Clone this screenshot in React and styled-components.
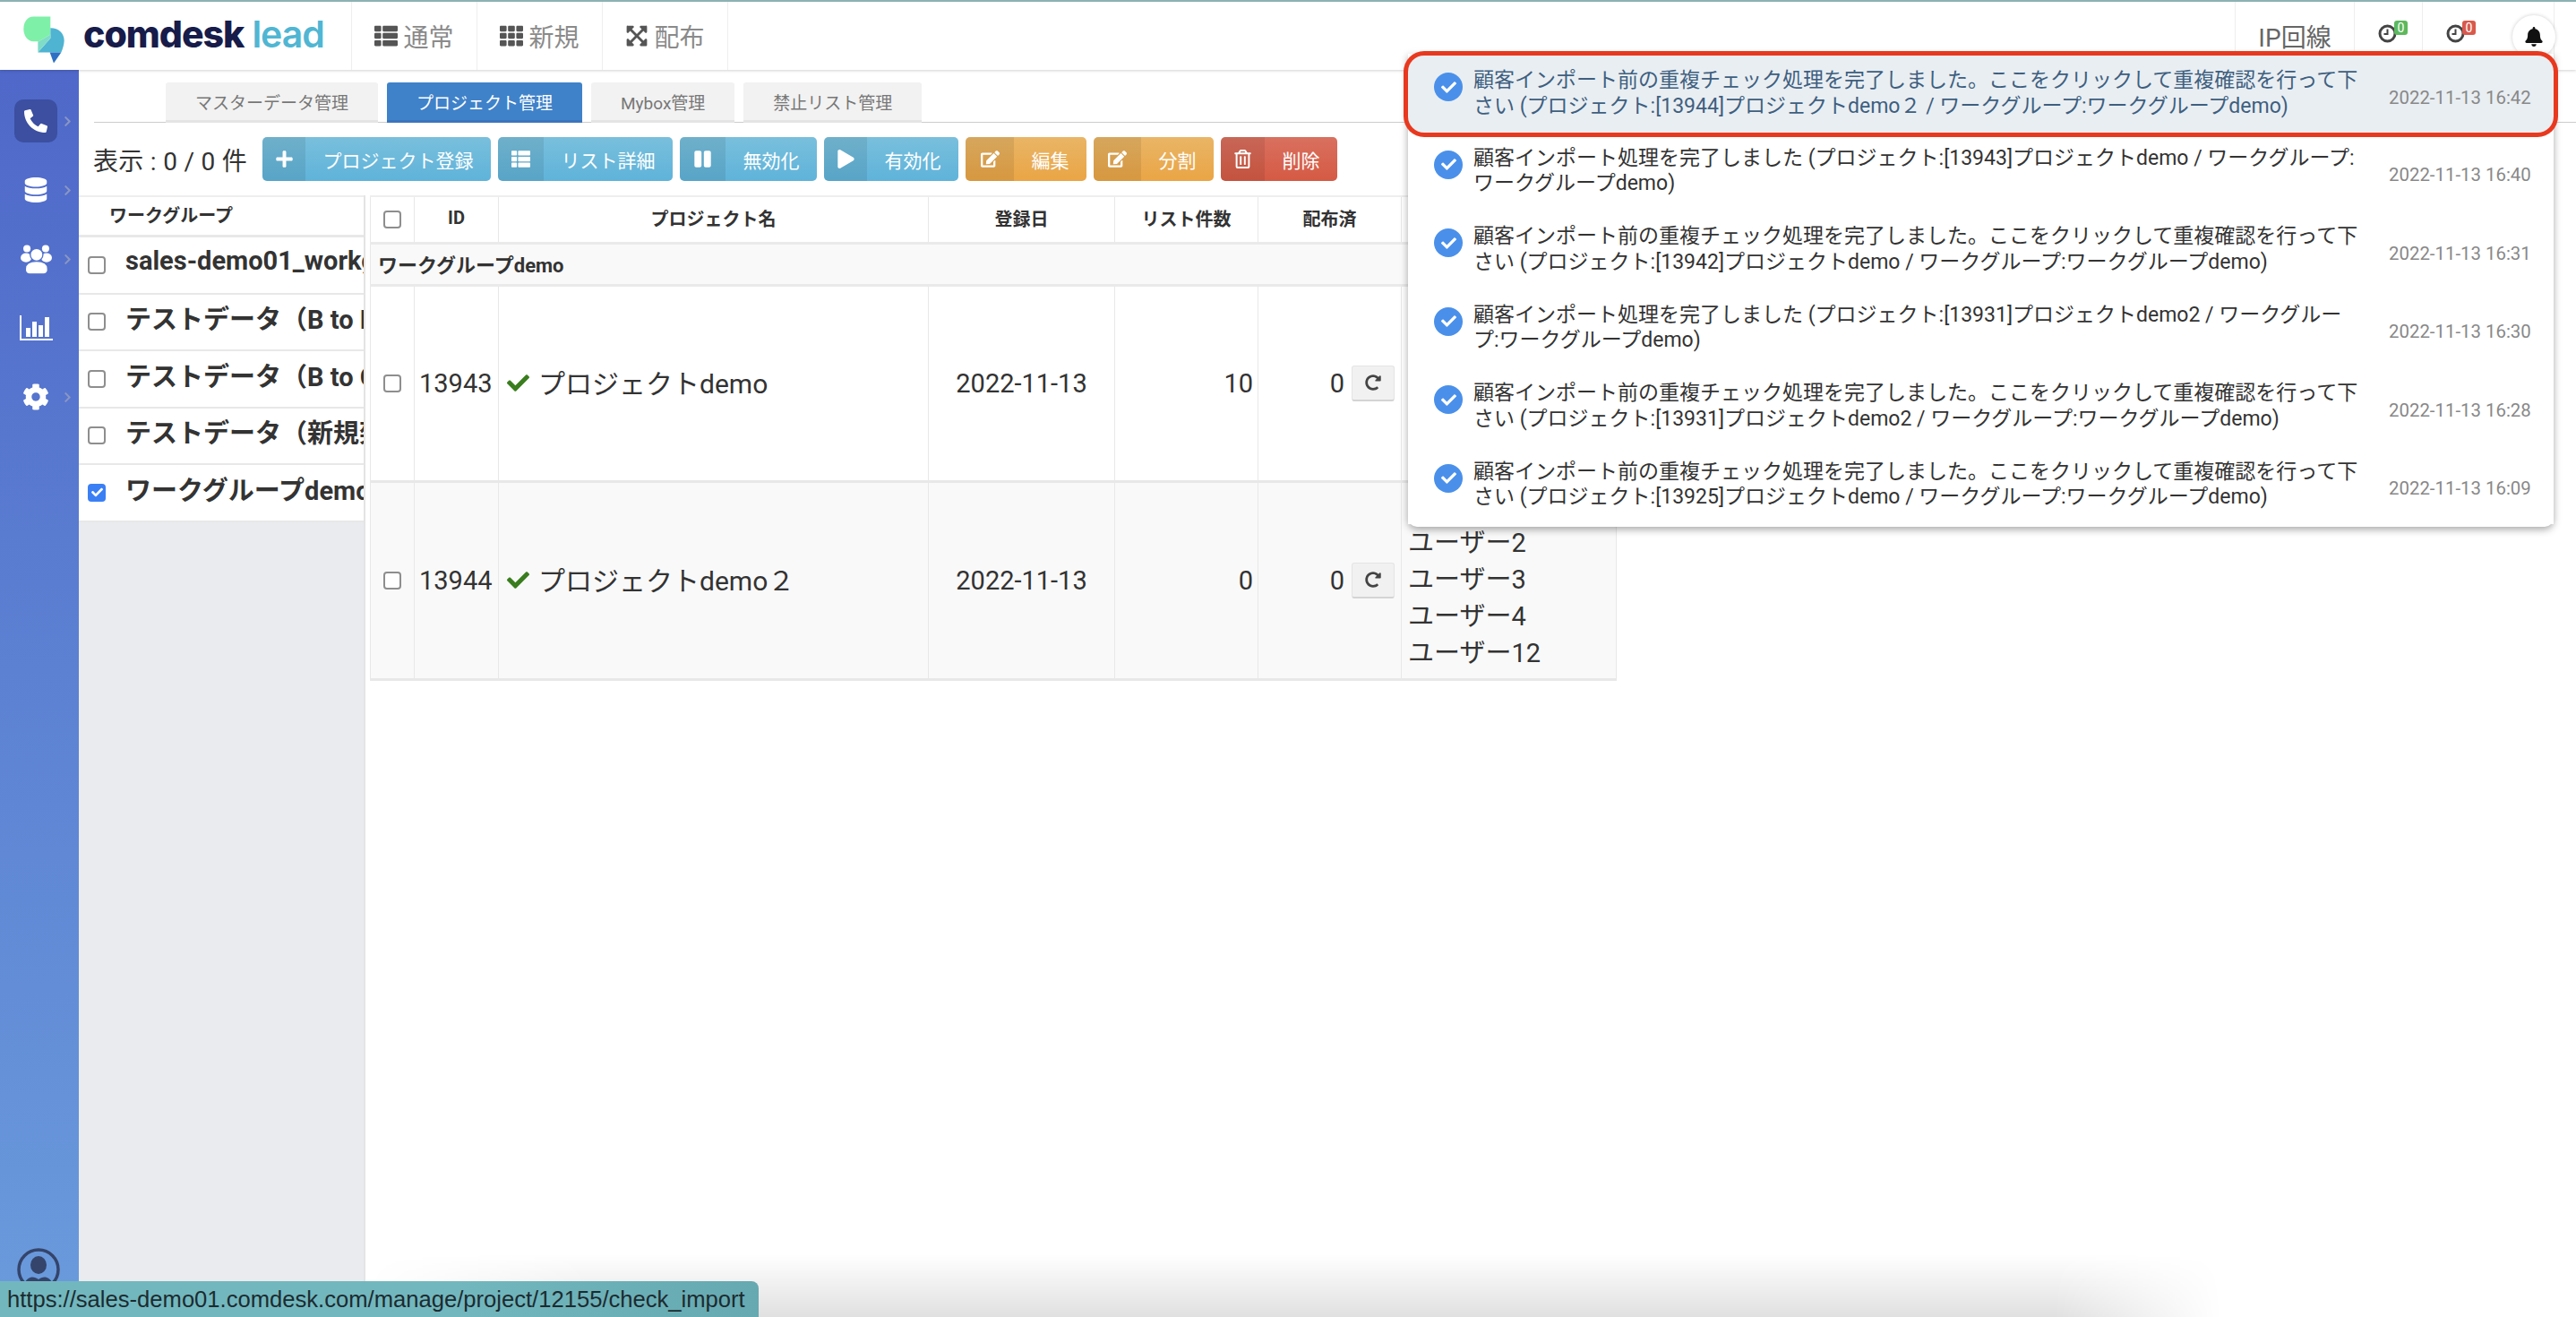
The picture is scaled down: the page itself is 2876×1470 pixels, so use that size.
import React from 'react'
import styled, { createGlobalStyle } from 'styled-components'
import {
  FaBell,
  FaCheck,
  FaChevronRight,
  FaCog,
  FaDatabase,
  FaEdit,
  FaExpandArrowsAlt,
  FaPause,
  FaPhoneAlt,
  FaPlay,
  FaPlus,
  FaRedoAlt,
  FaRegTrashAlt,
  FaTh,
  FaThList,
} from 'react-icons/fa'

const SANS = `Roboto, "Noto Sans CJK JP", sans-serif`

const GlobalStyle = createGlobalStyle`
  html, body {
    margin: 0;
    padding: 0;
    background: #fff;
    font-family: ${SANS};
    color: #333;
  }
  * {
    box-sizing: border-box;
  }
`

const toolbarButtons = [
  { label: 'プロジェクト登録', icon: <FaPlus />, iconWidth: 48, tone: 'info' },
  { label: 'リスト詳細', icon: <FaThList />, iconWidth: 51, tone: 'info' },
  { label: '無効化', icon: <FaPause />, iconWidth: 51, tone: 'info' },
  { label: '有効化', icon: <FaPlay />, iconWidth: 48, tone: 'info' },
  { label: '編集', icon: <FaEdit />, iconWidth: 54, tone: 'warning' },
  { label: '分割', icon: <FaEdit />, iconWidth: 53, tone: 'warning' },
  { label: '削除', icon: <FaRegTrashAlt />, iconWidth: 49, tone: 'danger' },
]

const tones = {
  info: 'linear-gradient(#79bfdc, #5fb3da)',
  warning: 'linear-gradient(#e9b566, #eaa545)',
  danger: 'linear-gradient(#d9705f, #d55a44)',
}

const workgroups = [
  { name: 'sales-demo01_workgroup' },
  { name: 'テストデータ（B to B）' },
  { name: 'テストデータ（B to C）' },
  { name: 'テストデータ（新規架電）' },
  { name: 'ワークグループdemo', checked: true },
]

const notices = [
  {
    lines: ['顧客インポート前の重複チェック処理を完了しました。ここをクリックして重複確認を行って下', 'さい (プロジェクト:[13944]プロジェクトdemo２ / ワークグループ:ワークグループdemo)'],
    time: '2022-11-13 16:42',
    active: true,
  },
  {
    lines: ['顧客インポート処理を完了しました (プロジェクト:[13943]プロジェクトdemo / ワークグループ:', 'ワークグループdemo)'],
    time: '2022-11-13 16:40',
  },
  {
    lines: ['顧客インポート前の重複チェック処理を完了しました。ここをクリックして重複確認を行って下', 'さい (プロジェクト:[13942]プロジェクトdemo / ワークグループ:ワークグループdemo)'],
    time: '2022-11-13 16:31',
  },
  {
    lines: ['顧客インポート処理を完了しました (プロジェクト:[13931]プロジェクトdemo2 / ワークグルー', 'プ:ワークグループdemo)'],
    time: '2022-11-13 16:30',
  },
  {
    lines: ['顧客インポート前の重複チェック処理を完了しました。ここをクリックして重複確認を行って下', 'さい (プロジェクト:[13931]プロジェクトdemo2 / ワークグループ:ワークグループdemo)'],
    time: '2022-11-13 16:28',
  },
  {
    lines: ['顧客インポート前の重複チェック処理を完了しました。ここをクリックして重複確認を行って下', 'さい (プロジェクト:[13925]プロジェクトdemo / ワークグループ:ワークグループdemo)'],
    time: '2022-11-13 16:09',
  },
]

const Logo = () => (
  <LogoMark viewBox="30 25 150 170">
    <path d="M70 32H127V92L88 115H70C50 115 37 95 37 73C37 50 50 32 70 32Z" fill="#7ef0a8" />
    <path d="M127 70C155 70 173 88 173 112C173 125 168 140 163 152H85L127 105Z" fill="#4fb3d2" />
    <path d="M85 115H88L127 92V105L85 152Z" fill="#7fdcc6" />
    <path d="M125 152H163L138 188Z" fill="#2f6fc4" />
  </LogoMark>
)

const ChartIcon = () => (
  <svg width="37" height="28" viewBox="0 0 37 28" fill="#fff">
    <path d="M0 0h2v26h35v2H0z" />
    <rect x="7" y="14" width="5" height="10" />
    <rect x="14" y="7" width="5" height="17" />
    <rect x="21" y="11" width="5" height="13" />
    <rect x="28" y="2" width="5" height="22" />
  </svg>
)

const GroupIcon = () => (
  <svg width="35" height="33" viewBox="72 520 104 97" fill="#fff">
    <circle cx="93" cy="533" r="12" />
    <circle cx="155" cy="533" r="12" />
    <ellipse cx="90" cy="563" rx="18" ry="15" />
    <ellipse cx="158" cy="563" rx="18" ry="15" />
    <circle cx="125" cy="553" r="21" stroke="#5172cc" strokeWidth="4" />
    <path
      d="M88 600C88 580 105 575 125 575C145 575 162 580 162 600V605C162 612 155 617 148 617H102C95 617 88 612 88 605Z"
      stroke="#5172cc"
      strokeWidth="4"
    />
  </svg>
)

const UserRing = () => (
  <svg width="48" height="48" viewBox="0 0 48 48" fill="none">
    <circle cx="24" cy="24" r="22" stroke="#34446b" strokeWidth="3.5" />
    <ellipse cx="24" cy="19" rx="9" ry="10" fill="#34446b" />
    <path d="M8 40C12 31 19 31 24 35C29 31 36 31 40 40C30 47 18 47 8 40Z" fill="#34446b" />
  </svg>
)

const ClockIcon = () => (
  <svg width="21" height="21" viewBox="0 0 21 21" fill="none" stroke="#444">
    <circle cx="10.5" cy="10.5" r="8.5" strokeWidth="3" />
    <path d="M10.5 5.5v5.5h-4" strokeWidth="2" />
  </svg>
)

const SideNav = ({ active, arrow = true, children }) => (
  <SideItem>
    <SideIcon $active={active}>{children}</SideIcon>
    <SideArrow $show={arrow}>
      <FaChevronRight />
    </SideArrow>
  </SideItem>
)

const Tick = ({ checked }) => (
  <Box $checked={checked}>{checked && <FaCheck />}</Box>
)

const App = () => {
  return (
    <Page>
      <GlobalStyle />
      <TopStrip />
      <Header>
        <Brand>
          <Logo />
          <Wordmark>
            comdesk<Lead>lead</Lead>
          </Wordmark>
        </Brand>
        <NavItem>
          <FaThList />
          <span>通常</span>
        </NavItem>
        <NavItem>
          <FaTh />
          <span>新規</span>
        </NavItem>
        <NavItem>
          <FaExpandArrowsAlt />
          <span>配布</span>
        </NavItem>
        <HeaderRight>
          <IpItem>IP回線</IpItem>
          <ClockItem>
            <ClockIcon />
            <ClockBadge $tone="#5cb85c">0</ClockBadge>
          </ClockItem>
          <ClockItem>
            <ClockIcon />
            <ClockBadge $tone="#d9594c">0</ClockBadge>
          </ClockItem>
          <BellItem>
            <BellCircle>
              <FaBell />
            </BellCircle>
          </BellItem>
        </HeaderRight>
      </Header>

      <Body>
        <Sidebar>
          <SideNav active>
            <FaPhoneAlt size={26} />
          </SideNav>
          <SideNav>
            <FaDatabase size={28} />
          </SideNav>
          <SideNav>
            <GroupIcon />
          </SideNav>
          <SideNav arrow={false}>
            <ChartIcon />
          </SideNav>
          <SideNav>
            <FaCog size={30} />
          </SideNav>
          <UserSlot>
            <UserRing />
          </UserSlot>
        </Sidebar>

        <Content>
          <Tabs>
            <Tab>マスターデータ管理</Tab>
            <Tab $active>プロジェクト管理</Tab>
            <Tab>Mybox管理</Tab>
            <Tab>禁止リスト管理</Tab>
          </Tabs>

          <Toolbar>
            <Count>表示 : 0 / 0 件</Count>
            {toolbarButtons.map((button) => (
              <ActionButton key={button.label} $tone={button.tone}>
                <ActionIcon $width={button.iconWidth}>{button.icon}</ActionIcon>
                <ActionLabel>{button.label}</ActionLabel>
              </ActionButton>
            ))}
          </Toolbar>

          <Split>
            <GroupPanel>
              <GroupHead>ワークグループ</GroupHead>
              {workgroups.map((group) => (
                <GroupRow key={group.name}>
                  <Tick checked={group.checked} />
                  <GroupName>{group.name}</GroupName>
                </GroupRow>
              ))}
            </GroupPanel>

            <ProjectTable>
              <colgroup>
                <col width="49" />
                <col width="94" />
                <col width="480" />
                <col width="208" />
                <col width="160" />
                <col width="160" />
                <col width="240" />
              </colgroup>
              <thead>
                <tr>
                  <HeadCell>
                    <Tick />
                  </HeadCell>
                  <HeadCell>ID</HeadCell>
                  <HeadCell>プロジェクト名</HeadCell>
                  <HeadCell>登録日</HeadCell>
                  <HeadCell>リスト件数</HeadCell>
                  <HeadCell>配布済</HeadCell>
                  <HeadCell>担当者</HeadCell>
                </tr>
              </thead>
              <tbody>
                <tr>
                  <GroupCell colSpan={7}>ワークグループdemo</GroupCell>
                </tr>
                <Row>
                  <TickCell>
                    <Tick />
                  </TickCell>
                  <Cell>13943</Cell>
                  <Cell>
                    <ProjectName>
                      <FaCheck />
                      プロジェクトdemo
                    </ProjectName>
                  </Cell>
                  <Cell $align="center">2022-11-13</Cell>
                  <Cell $align="right">10</Cell>
                  <Cell $align="right">
                    <Allocated>
                      0
                      <RefreshButton>
                        <FaRedoAlt />
                      </RefreshButton>
                    </Allocated>
                  </Cell>
                  <UserCell>ユーザー1</UserCell>
                </Row>
                <Row $striped>
                  <TickCell $tall>
                    <Tick />
                  </TickCell>
                  <Cell>13944</Cell>
                  <Cell>
                    <ProjectName>
                      <FaCheck />
                      プロジェクトdemo２
                    </ProjectName>
                  </Cell>
                  <Cell $align="center">2022-11-13</Cell>
                  <Cell $align="right">0</Cell>
                  <Cell $align="right">
                    <Allocated>
                      0
                      <RefreshButton>
                        <FaRedoAlt />
                      </RefreshButton>
                    </Allocated>
                  </Cell>
                  <UserCell>
                    ユーザー1
                    <br />
                    ユーザー2
                    <br />
                    ユーザー3
                    <br />
                    ユーザー4
                    <br />
                    ユーザー12
                  </UserCell>
                </Row>
              </tbody>
            </ProjectTable>
          </Split>
        </Content>
      </Body>

      <NoticePanel>
        {notices.map((notice) => (
          <Notice key={notice.time} $active={notice.active}>
            <NoticeIcon>
              <FaCheck />
            </NoticeIcon>
            <NoticeText>
              {notice.lines[0]}
              <br />
              {notice.lines[1]}
            </NoticeText>
            <NoticeTime>{notice.time}</NoticeTime>
          </Notice>
        ))}
      </NoticePanel>

      <BottomFade />
      <StatusBar>https://sales-demo01.comdesk.com/manage/project/12155/check_import</StatusBar>
    </Page>
  )
}

export default App

const Page = styled.div`
  position: relative;
  width: 2876px;
  height: 1470px;
  display: flex;
  flex-direction: column;
  overflow: hidden;
`

const TopStrip = styled.div`
  height: 2px;
  background: #8fb4b8;
`

const Header = styled.header`
  height: 76px;
  display: flex;
  align-items: stretch;
  background: #fff;
  box-shadow: 0 1px 3px rgba(0, 0, 0, 0.18);
  position: relative;
  z-index: 1;
`

const Brand = styled.div`
  width: 393px;
  position: relative;
  border-right: 1px solid #eee;
  display: flex;
  align-items: flex-start;
  padding: 14px 0 0 24px;
`

const LogoMark = styled.svg`
  width: 50px;
  height: 57px;
  flex: none;
`

const Wordmark = styled.div`
  margin-left: 19px;
  font-family: Inter, sans-serif;
  font-size: 41px;
  line-height: 44px;
  font-weight: 800;
  letter-spacing: -1px;
  color: #171c4a;
  white-space: nowrap;
`

const Lead = styled.span`
  margin-left: 9px;
  color: #4fb6d3;
  font-weight: 600;
`

const NavItem = styled.div`
  width: 140px;
  border-right: 1px solid #eee;
  display: flex;
  align-items: center;
  justify-content: center;
  gap: 6px;
  font-size: 28px;
  color: #8a8a8a;

  svg {
    color: #555;
    font-size: 26px;
  }
`

const HeaderRight = styled.div`
  margin-left: auto;
  margin-right: 24px;
  display: flex;
  align-items: stretch;
`

const IpItem = styled.div`
  width: 133px;
  border-left: 1px solid #eee;
  display: flex;
  align-items: center;
  justify-content: center;
  font-size: 28px;
  color: #666;
`

const ClockItem = styled.div`
  width: 76px;
  border-left: 1px solid #eee;
  position: relative;

  svg {
    position: absolute;
    left: 26px;
    top: 25px;
  }
`

const ClockBadge = styled.span`
  position: absolute;
  left: 44px;
  top: 21px;
  width: 15px;
  height: 16px;
  border-radius: 3px;
  background: ${(props) => props.$tone};
  color: #fff;
  font-size: 14px;
  line-height: 16px;
  text-align: center;
`

const BellItem = styled.div`
  width: 72px;
  border-right: 1px solid #eee;
  position: relative;
`

const BellCircle = styled.div`
  position: absolute;
  left: 25px;
  top: 15px;
  width: 48px;
  height: 48px;
  border-radius: 50%;
  background: #fff;
  box-shadow: 0 0 4px rgba(0, 0, 0, 0.2);
  display: flex;
  align-items: center;
  justify-content: center;
  font-size: 22px;
  color: #111;
`

const Body = styled.div`
  flex: 1;
  display: flex;
  min-height: 0;
`

const Sidebar = styled.nav`
  width: 88px;
  flex: none;
  display: flex;
  flex-direction: column;
  gap: 29px;
  padding: 33px 0 29px;
  background: linear-gradient(#4f68c9, #6a9bdc);
`

const SideItem = styled.div`
  display: flex;
  align-items: center;
  padding-left: 16px;
`

const SideIcon = styled.div`
  width: 48px;
  height: 48px;
  border-radius: 10px;
  display: flex;
  align-items: center;
  justify-content: center;
  color: #fff;
  background: ${(props) => (props.$active ? '#3c4fa0' : 'transparent')};
`

const SideArrow = styled.div`
  margin-left: 5px;
  font-size: 13px;
  line-height: 0;
  color: #8a96c4;
  visibility: ${(props) => (props.$show ? 'visible' : 'hidden')};
`

const UserSlot = styled.div`
  margin-top: auto;
  padding-left: 19px;
  line-height: 0;
`

const Content = styled.main`
  flex: 1;
  min-width: 0;
  display: flex;
  flex-direction: column;
  background: #fff;
`

const Tabs = styled.div`
  margin: 14px 0 0 17px;
  height: 45px;
  padding-left: 80px;
  display: flex;
  gap: 10px;
  border-bottom: 1px solid #ccc;
`

const Tab = styled.div`
  height: 45px;
  padding: 0 33px;
  display: flex;
  align-items: center;
  font-size: 19px;
  border-radius: 3px 3px 0 0;
  background: ${(props) => (props.$active ? '#3f82c9' : '#f2f2f2')};
  border-bottom: 3px solid ${(props) => (props.$active ? '#3a74bd' : '#e4e4e4')};
  color: ${(props) => (props.$active ? '#fff' : '#777')};
`

const Toolbar = styled.div`
  margin-top: 16px;
  height: 49px;
  padding-left: 16px;
  display: flex;
  gap: 8px;
`

const Count = styled.div`
  width: 181px;
  display: flex;
  align-items: center;
  font-size: 28px;
  letter-spacing: 0.3px;
  color: #333;
  white-space: nowrap;
`

const ActionButton = styled.div`
  display: flex;
  border-radius: 5px;
  overflow: hidden;
  color: #fff;
  background: ${(props) => tones[props.$tone]};
`

const ActionIcon = styled.span`
  width: ${(props) => props.$width}px;
  display: flex;
  align-items: center;
  justify-content: center;
  font-size: 21px;
  background: rgba(0, 0, 0, 0.08);
`

const ActionLabel = styled.span`
  padding: 0 19.5px;
  display: flex;
  align-items: center;
  font-size: 21px;
`

const Split = styled.div`
  margin-top: 16px;
  flex: 1;
  display: flex;
  min-height: 0;
`

const GroupPanel = styled.aside`
  width: 320px;
  flex: none;
  background: #e9ebee;
  border-right: 2px solid #e4e4e4;
`

const GroupHead = styled.div`
  height: 47px;
  padding: 0 0 4px 34px;
  display: flex;
  align-items: center;
  font-size: 20px;
  font-weight: 700;
  color: #333;
  background: #fff;
  border-top: 2px solid #eee;
  border-bottom: 3px solid #e8e8e8;
`

const GroupRow = styled.div`
  height: 63.5px;
  padding-left: 10px;
  display: flex;
  align-items: center;
  gap: 22px;
  background: #fff;
  border-bottom: 2px solid #e8e8e8;
`

const GroupName = styled.div`
  flex: 1;
  min-width: 0;
  overflow: hidden;
  white-space: nowrap;
  font-size: 29px;
  font-weight: 700;
  color: #333;
  margin-top: -10px;
`

const Box = styled.span`
  flex: none;
  width: 20px;
  height: 20px;
  display: inline-flex;
  align-items: center;
  justify-content: center;
  vertical-align: middle;
  border-radius: 4px;
  border: ${(props) => (props.$checked ? 'none' : '2px solid #8e8e8e')};
  background: ${(props) => (props.$checked ? '#3b7ff5' : '#fff')};
  color: #fff;
  font-size: 13px;
`

const ProjectTable = styled.table`
  margin-left: 5px;
  width: 1391px;
  table-layout: fixed;
  border-collapse: collapse;
  align-self: flex-start;
`

const HeadCell = styled.th`
  height: 52px;
  padding: 0 0 3px;
  font-size: 20px;
  font-weight: 700;
  color: #333;
  text-align: center;
  border: 1px solid #e8e8e8;
  border-top: 2px solid #eee;
  border-bottom: 3px solid #eaeaea;
`

const GroupCell = styled.td`
  height: 47px;
  padding: 0 8px 2px;
  font-size: 22px;
  font-weight: 700;
  color: #333;
  background: #f9f9f9;
  border: 1px solid #e8e8e8;
  border-bottom: 3px solid #eaeaea;
`

const Row = styled.tr`
  background: ${(props) => (props.$striped ? '#f9f9f9' : '#fff')};
`

const Cell = styled.td`
  height: 219px;
  padding: 0 5px;
  font-size: 29px;
  color: #333;
  text-align: ${(props) => props.$align || 'left'};
  border: 1px solid #e8e8e8;
  border-bottom: 3px solid #e8e8e8;
`

const TickCell = styled(Cell)`
  height: ${(props) => (props.$tall ? 221 : 219)}px;
  text-align: center;
  line-height: 0;
`

const UserCell = styled(Cell)`
  padding: 0 7px;
  line-height: 41px;
`

const ProjectName = styled.div`
  display: flex;
  align-items: center;
  gap: 10px;
  padding-left: 4px;
  margin-top: -3px;
  font-size: 30px;

  svg {
    color: #3a7d1e;
    font-size: 25px;
    margin-top: 3px;
  }
`

const Allocated = styled.div`
  display: flex;
  align-items: center;
  justify-content: flex-end;
  gap: 8px;
  padding-right: 2px;
`

const RefreshButton = styled.span`
  width: 48px;
  height: 40px;
  display: flex;
  align-items: center;
  justify-content: center;
  font-size: 18px;
  color: #444;
  background: #f1f1f1;
  border: 1px solid #e4e4e4;
  border-bottom: 2px solid #d4d4d4;
  border-radius: 3px;
`

const NoticePanel = styled.section`
  position: absolute;
  left: 1572px;
  top: 60px;
  width: 1279px;
  padding-bottom: 3px;
  z-index: 2;
  background: #fff;
  border-radius: 0 0 10px 10px;
  box-shadow: 0 3px 8px rgba(0, 0, 0, 0.35);
`

const Notice = styled.div`
  height: ${(props) => (props.$active ? 85.5 : 87.5)}px;
  margin-top: ${(props) => (props.$active ? 2 : 0)}px;
  padding-left: 29px;
  display: flex;
  align-items: center;
  position: relative;
  color: ${(props) => (props.$active ? '#3e5f80' : '#333')};
  background: ${(props) => (props.$active ? '#e9eef2' : '#fff')};
  border-radius: ${(props) => (props.$active ? '18px' : '0')};
  box-shadow: ${(props) => (props.$active ? '0 0 0 5px #e8391f' : 'none')};
  z-index: ${(props) => (props.$active ? 1 : 0)};
`

const NoticeIcon = styled.span`
  flex: none;
  width: 32px;
  height: 32px;
  margin-top: -15px;
  border-radius: 50%;
  display: flex;
  align-items: center;
  justify-content: center;
  background: #4a90ea;
  color: #fff;
  font-size: 17px;
`

const NoticeText = styled.div`
  width: 1022px;
  margin-left: 12px;
  font-size: 23px;
  line-height: 28.5px;
  white-space: nowrap;
`

const NoticeTime = styled.div`
  margin-top: 8px;
  font-size: 20.4px;
  color: #888;
  white-space: nowrap;
`

const BottomFade = styled.div`
  position: absolute;
  left: 410px;
  bottom: 0;
  width: 2070px;
  height: 70px;
  background: linear-gradient(rgba(0, 0, 0, 0), rgba(0, 0, 0, 0.12));
  mask-image: linear-gradient(to right, transparent 0, #000 12%, #000 91%, transparent 100%);
  pointer-events: none;
`

const StatusBar = styled.div`
  position: absolute;
  left: 0;
  bottom: 0;
  width: 847px;
  height: 40px;
  padding-left: 8px;
  display: flex;
  align-items: center;
  z-index: 3;
  font-family: "Liberation Sans", sans-serif;
  font-size: 25.6px;
  color: #1c2b30;
  white-space: nowrap;
  background: linear-gradient(to right, #72b7be 60%, #66a9b0);
  border-radius: 0 8px 0 0;
`
